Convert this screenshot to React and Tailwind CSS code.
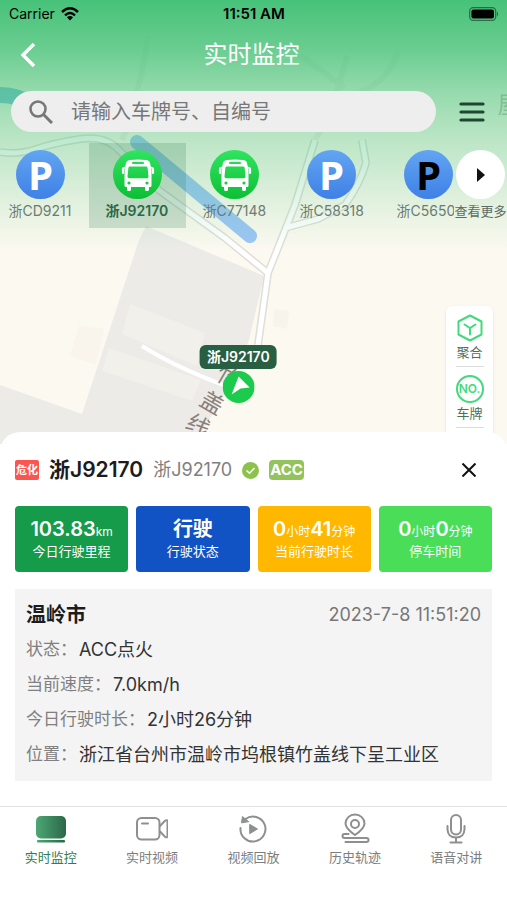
import React, { useState } from "react";

const vehicles = [
  { id: 1, plate: "浙CD9211", type: "park" },
  { id: 2, plate: "浙J92170", type: "bus" },
  { id: 3, plate: "浙C77148", type: "bus" },
  { id: 4, plate: "浙C58318", type: "park" },
  { id: 5, plate: "浙C5650", type: "offline" },
];

const details = [
  { label: "状态：", value: "ACC点火" },
  { label: "当前速度：", value: "7.0km/h" },
  { label: "今日行驶时长：", value: "2小时26分钟" },
  { label: "位置：", value: "浙江省台州市温岭市坞根镇竹盖线下呈工业区" },
];

const BusIcon = () => (
  <svg viewBox="0 0 34 34" className="h-[34px] w-[34px]" fill="none">
    <path
      fill="#fff"
      fillRule="evenodd"
      d="M5 5Q5.500 2.300 9 2Q17 0.800 25 2Q28.500 2.300 29 5L30.500 12V27.500Q30.500 29 29 29H28V31.500Q28 33 26.500 33H25.500Q24 33 24 31.500V29H10V31.500Q10 33 8.500 33H7.500Q6 33 6 31.500V29H5Q3.500 29 3.500 27.500V12ZM12 3.800Q11 3.800 11 4.900T12 6H22Q23 6 23 4.900T22 3.800ZM9 8.500Q7.600 8.500 7.400 9.800L6.500 18.500Q6.500 20.300 8 20.300H26Q27.500 20.300 27.500 18.500L26.600 9.800Q26.400 8.500 25 8.500ZM8 23.400A1.600 1.600 0 1 0 8 26.600A1.600 1.600 0 1 0 8 23.400ZM26 23.400A1.600 1.600 0 1 0 26 26.600A1.600 1.600 0 1 0 26 23.400Z"
    />
    <path d="M2 10.500V15M32 10.500V15" stroke="#fff" strokeWidth="2.200" strokeLinecap="round" />
    <path d="M2 10.500L5 9M32 10.500L29 9" stroke="#fff" strokeWidth="1.500" />
  </svg>
);

const MapCanvas = () => (
  <svg
    className="absolute inset-0 h-full w-full"
    viewBox="0 0 507 450"
    preserveAspectRatio="xMidYMin slice"
    fill="none"
  >
    <rect width="507" height="450" fill="#fcf9f0" />
    {/* buildings */}
    <path d="M146 226L264 276L249 340L228 390L190 450H0V385L82 414L139 240Z" fill="#ecebe8" />
    <path d="M130 304L205 333L197 366L122 334Z" fill="#f1f0ea" />
    <path d="M109 348L201 380L192 401L102 371Z" fill="#f1f0ea" />
    <path d="M79 326L104 329L96 365L70 356Z" fill="#f9f5ec" />
    <path d="M274 309L289 311L287 329L273 326Z" fill="#f7f4ec" />
    {/* river */}
    <path d="M-10 96Q14 92 34 106" stroke="#7fc3dd" strokeWidth="16" />
    <path d="M137 142L250 236" stroke="#9cc6f4" strokeWidth="14" strokeLinecap="round" />
    {/* small roads, barely visible */}
    <g stroke="#e6e4dc" strokeWidth="6" opacity="0.500">
      <path d="M122 140L128 125L142 72L148 36" />
      <path d="M300 55L345 88M347 56L330 115L315 140M398 50Q390 80 360 92" />
    </g>
    <g stroke="#e0ded8" strokeWidth="8" strokeLinejoin="round">
      <path d="M0 152Q18 155 36 149T80 139T120 151L160 191L225 238L268 273" />
      <path d="M315 140L295 205L268 273L258 345" />
      <path d="M285 228L318 219L345 205Q360 184 366 163L362 140" />
    </g>
    <g stroke="#fff" strokeWidth="5" strokeLinejoin="round">
      <path d="M0 152Q18 155 36 149T80 139T120 151L160 191L225 238L268 273" />
      <path d="M315 140L295 205L268 273L258 345" />
      <path d="M285 228L318 219L345 205Q360 184 366 163L362 140" />
      <path d="M142 346Q175 367 226 386" strokeWidth="4" />
    </g>
    <g fill="#8b8079" fontSize="23" textAnchor="middle">
      <text transform="translate(228 377) rotate(30)" y="8">竹</text>
      <text transform="translate(212 403) rotate(30)" y="8">盖</text>
      <text transform="translate(198 426) rotate(30)" y="8">线</text>
      <text x="509" y="113" fillOpacity="0.5">屋</text>
    </g>
  </svg>
);

const StatusBar = () => (
  <div className="grid h-7 grid-cols-3 items-center pl-[9px] pr-2 text-sm text-black">
    <div className="flex items-center gap-1.5">
      <span>Carrier</span>
      <svg viewBox="0 0 18 14" className="h-3.5 w-[18px]" fill="none" stroke="#000" strokeWidth="2.400">
        <path d="M1 5Q9-2.400 17 5" />
        <path d="M4 8.400Q9 3.800 14 8.400" />
        <path d="M9 13.500L5.900 10.300Q9 7.800 12.100 10.300Z" fill="#000" stroke="none" />
      </svg>
    </div>
    <span className="text-center text-[15px] font-semibold">11:51 AM</span>
    <svg viewBox="0 0 30 14" className="h-3.5 w-[30px] justify-self-end" fill="none">
      <rect x="0.700" y="0.700" width="26" height="12.600" rx="3.500" stroke="#000" strokeOpacity="0.450" strokeWidth="1.300" />
      <rect x="2.400" y="2.400" width="22.600" height="9.200" rx="2" fill="#000" />
      <path d="M28 4.500Q30 7 28 9.500Z" fill="#000" fillOpacity="0.500" />
    </svg>
  </div>
);

const VehicleItem = ({ vehicle, active, onClick }) => (
  <button
    type="button"
    onClick={onClick}
    className={`flex w-[97px] shrink-0 flex-col items-center pb-[5px] pt-[7px] ${
      active ? "bg-[#2f7a4f]/20" : ""
    }`}
  >
    <span
      className={`flex h-[49px] w-[49px] items-center justify-center rounded-full bg-linear-to-b ${
        vehicle.type === "bus"
          ? "from-[#2fe45f] to-[#0abf35]"
          : "from-[#62a5f2] to-[#3f80e6]"
      }`}
    >
      {vehicle.type === "bus" ? (
        <BusIcon />
      ) : (
        <span
          className={`font-['Open_Sans',sans-serif] text-[40px] font-bold leading-[48px] ${
            vehicle.type === "offline" ? "text-black" : "text-white"
          }`}
        >
          P
        </span>
      )}
    </span>
    <span
      className={`w-16 whitespace-nowrap text-left text-sm leading-6 ${
        active ? "font-semibold text-[#2b6847]" : "text-[#6d7b71]"
      }`}
    >
      {vehicle.plate}
    </span>
  </button>
);

const StatCard = ({ className, label, children }) => (
  <div
    className={`flex h-[66px] flex-col items-center justify-center rounded text-white ${className}`}
  >
    <p className="whitespace-nowrap text-xl font-semibold leading-6">{children}</p>
    <p className="whitespace-nowrap text-[13px] leading-5">{label}</p>
  </div>
);

const tabs = [
  {
    name: "实时监控",
    icon: (
      <>
        <defs>
          <linearGradient id="monitor" x1="0" x2="1">
            <stop stopColor="#4ba874" />
            <stop offset="1" stopColor="#2c6748" />
          </linearGradient>
        </defs>
        <rect x="1" y="3" width="30" height="22.500" rx="5" fill="url(#monitor)" stroke="none" />
        <rect x="2" y="27" width="28" height="2.500" rx="1" fill="url(#monitor)" stroke="none" />
      </>
    ),
  },
  {
    name: "实时视频",
    icon: (
      <>
        <rect x="1" y="5" width="22.500" height="21.500" rx="4.500" />
        <path d="M6 10.500H12M24 13L29 7.800Q31.500 6 31.500 9V22.500Q31.500 25.500 29 23.700L24 18.500" />
      </>
    ),
  },
  {
    name: "视频回放",
    icon: (
      <>
        <path d="M3.500 15A12.500 12.500 0 1 0 8.500 6" />
        <path d="M4.500 9.500L5.500 3.500L11.500 8.500Z" fill="#8d8f90" strokeWidth="1" />
        <path d="M13 11.500L20.500 16L13 20.500Z" fill="#8d8f90" strokeWidth="1" />
      </>
    ),
  },
  {
    name: "历史轨迹",
    icon: (
      <>
        <path d="M16 22Q6.500 15.500 6.500 10.500A9.500 9 0 0 1 25.500 10.500Q25.500 15.500 16 22Z" />
        <circle cx="16" cy="11" r="4" />
        <path d="M9.500 21H5.500A2 2 0 0 0 5.500 25H27.500A2 2 0 0 1 27.500 29H6.500" />
      </>
    ),
  },
  {
    name: "语音对讲",
    icon: (
      <>
        <rect x="11" y="2" width="10" height="19.500" rx="5" />
        <path d="M7.500 13V16.500Q8 24.500 16 24.500T24.500 16.500V13M16 24.500V29M10.500 29.500H21.500" />
      </>
    ),
  },
];

const App = () => {
  const [activeVehicle, setActiveVehicle] = useState(2);
  const [activeTab, setActiveTab] = useState(0);
  const [keyword, setKeyword] = useState("");

  return (
    <div className="flex min-h-screen flex-col overflow-x-hidden bg-white font-[Inter,'Noto_Sans_CJK_SC',sans-serif]">
      <section className="relative flex flex-col">
        <MapCanvas />
        <div className="absolute inset-x-0 top-0 h-[250px] bg-[linear-gradient(to_bottom,rgba(63,192,116,0.96)_0%,rgba(63,192,116,0.77)_20%,rgba(63,192,116,0.55)_36%,rgba(63,192,116,0.34)_56%,rgba(63,192,116,0.15)_80%,rgba(63,192,116,0)_100%)]" />

        <header className="relative">
          <StatusBar />
          <div className="grid h-[54px] grid-cols-[1fr_auto_1fr] items-center pl-5 pr-6 text-white">
            <button type="button" aria-label="返回" className="justify-self-start">
              <svg viewBox="0 0 16 26" className="h-[26px] w-4" fill="none" stroke="#fff" strokeWidth="3.500">
                <path d="M14 2L3 13L14 24" />
              </svg>
            </button>
            <h1 className="text-2xl">实时监控</h1>
          </div>
          <div className="mt-[9px] flex items-center gap-[23px] pl-[11px] pr-[22px]">
            <label className="flex h-[41px] flex-1 items-center gap-[18px] rounded-full bg-[#eeeeee] pl-[18px] pr-4">
              <svg viewBox="0 0 24 24" className="h-6 w-6 shrink-0" fill="none" stroke="#777" strokeWidth="2.600">
                <circle cx="9" cy="9" r="7.500" />
                <path d="M14.500 14.500L23 23" strokeWidth="3" />
              </svg>
              <input
                value={keyword}
                onChange={(e) => setKeyword(e.target.value)}
                placeholder="请输入车牌号、自编号"
                aria-label="请输入车牌号、自编号"
                className="w-full min-w-0 bg-transparent text-xl text-[#333] outline-none placeholder:text-[#777]"
              />
            </label>
            <button type="button" aria-label="菜单">
              <svg viewBox="0 0 26 22" className="h-[22px] w-[26px]" stroke="#1f4632" strokeWidth="3.200" strokeLinecap="round">
                <path d="M2 3H24M2 11H24M2 19H24" />
              </svg>
            </button>
          </div>
        </header>

        <div className="relative mt-[11px] flex">
          <div className="flex min-w-0 flex-1 overflow-hidden">
            <div className="-ml-2 flex">
              {vehicles.map((vehicle) => (
                <VehicleItem
                  key={vehicle.id}
                  vehicle={vehicle}
                  active={vehicle.id === activeVehicle}
                  onClick={() => setActiveVehicle(vehicle.id)}
                />
              ))}
            </div>
          </div>
          <button type="button" className="flex w-[53px] shrink-0 flex-col items-center pt-[7px]">
            <span className="flex h-[49px] w-[49px] items-center justify-center rounded-full bg-white">
              <svg viewBox="0 0 8 14" className="h-3.5 w-2">
                <path d="M0 0L8 7L0 14Z" fill="#111" />
              </svg>
            </span>
            <span className="whitespace-nowrap text-[13px] leading-6 text-[#5f6b63]">查看更多</span>
          </button>
        </div>

        <div className="absolute left-[47%] top-[345px] flex -translate-x-1/2 flex-col items-center">
          <span className="whitespace-nowrap rounded-md bg-[#285f42] px-[7px] text-sm font-semibold leading-6 text-white">
            浙J92170
          </span>
          <svg viewBox="0 0 32 32" className="mt-0.5 h-8 w-8">
            <circle cx="16" cy="16" r="16" fill="#1ccb4b" />
            <path d="M16 5.500L27 16.500L18 17.500L9 23.500Z" fill="#fff" />
          </svg>
        </div>

        <div className="relative mr-3.5 mt-[78px] flex w-[47px] flex-col items-center self-end rounded-md bg-white px-2.5 pb-4 pt-2 text-[13px] text-[#4d6f5c] shadow-sm">
          <button type="button" className="flex flex-col items-center border-b border-[#dcdcdc] pb-1">
            <svg viewBox="0 0 28 28" className="h-7 w-7" fill="none" stroke="#42da7b" strokeWidth="2">
              <path d="M14 1.500L25.500 7.500V20.500L14 26.500L2.500 20.500V7.500Z" strokeLinejoin="round" />
              <path d="M8.500 10.500L14 14L19.500 10.500M14 14V20.500" strokeLinecap="round" />
            </svg>
            <span className="leading-5">聚合</span>
          </button>
          <button type="button" className="flex flex-col items-center border-b border-[#dcdcdc] pb-1 pt-2">
            <span className="flex h-7 w-7 items-center justify-center rounded-full border-2 border-[#42da7b] text-xs font-semibold text-[#42da7b]">
              NO.
            </span>
            <span className="leading-5">车牌</span>
          </button>
        </div>
      </section>

      <main className="relative -mt-3 rounded-t-[20px] bg-white px-[15px] pb-[25px] pt-6">
        <div className="flex h-7 items-center">
          <span className="rounded-xs bg-[#f9564f] px-px text-[11px] font-semibold leading-5 text-white">
            危化
          </span>
          <h2 className="ml-2.5 text-[21px] font-semibold text-[#1c1c1c]">浙J92170</h2>
          <span className="ml-2.5 text-lg text-[#808080]">浙J92170</span>
          <svg viewBox="0 0 17 17" className="ml-2.5 h-[17px] w-[17px]" fill="none">
            <circle cx="8.500" cy="8.500" r="8.500" fill="#8bc34a" />
            <path d="M4.500 8.500L7.500 11.300L12.500 6" stroke="#fff" strokeWidth="1.500" />
          </svg>
          <span className="ml-2.5 rounded bg-[#93c35b] px-px text-[15px] font-bold leading-5 text-white">
            ACC
          </span>
          <button type="button" aria-label="关闭" className="ml-auto mr-4">
            <svg viewBox="0 0 14 14" className="h-3.5 w-3.5" stroke="#111" strokeWidth="2">
              <path d="M0.500 0.500L13.500 13.500M13.500 0.500L0.500 13.500" />
            </svg>
          </button>
        </div>

        <div className="mt-[22px] grid grid-cols-4 gap-2">
          <StatCard className="bg-[#159b49]" label="今日行驶里程">
            103.83<span className="text-xs font-normal">km</span>
          </StatCard>
          <StatCard className="bg-[#1152c5]" label="行驶状态">
            行驶
          </StatCard>
          <StatCard className="bg-[#ffb700]" label="当前行驶时长">
            0<span className="text-xs font-normal">小时</span>41
            <span className="text-xs font-normal">分钟</span>
          </StatCard>
          <StatCard className="bg-[#4ade58]" label="停车时间">
            0<span className="text-xs font-normal">小时</span>0
            <span className="text-xs font-normal">分钟</span>
          </StatCard>
        </div>

        <div className="mt-[17px] bg-[#f4f4f4] px-[11px] pb-[9px] pt-2">
          <div className="flex h-[35px] items-center justify-between">
            <h3 className="text-xl font-bold text-[#1c1c1c]">温岭市</h3>
            <time className="text-lg text-[#777]">2023-7-8 11:51:20</time>
          </div>
          <dl>
            {details.map((item) => (
              <div key={item.label} className="flex min-h-[35px] items-center gap-0.5">
                <dt className="shrink-0 text-[17px] text-[#808080]">{item.label}</dt>
                <dd className="text-lg leading-6 text-[#333]">{item.value}</dd>
              </div>
            ))}
          </dl>
        </div>
      </main>

      <nav className="grid flex-1 grid-cols-5 items-start border-t border-[#e2e2e2] pb-8 pt-1.5">
        {tabs.map((tab, index) => (
          <button
            key={tab.name}
            type="button"
            onClick={() => setActiveTab(index)}
            className={`flex flex-col items-center gap-0.5 text-[13px] leading-5 ${
              index === activeTab ? "text-[#2e7d53]" : "text-[#7b7d7e]"
            }`}
          >
            <svg viewBox="0 0 32 32" className="h-8 w-8" fill="none" stroke="#8d8f90" strokeWidth="2" strokeLinecap="round">
              {tab.icon}
            </svg>
            {tab.name}
          </button>
        ))}
      </nav>
    </div>
  );
};

export default App;
